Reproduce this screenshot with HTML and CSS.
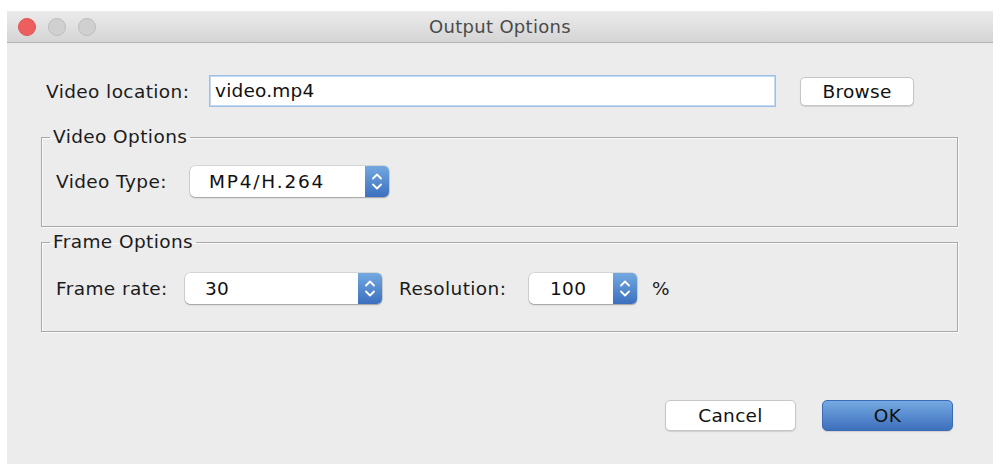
FILE: index.html
```html
<!DOCTYPE html>
<html>
<head>
<meta charset="utf-8">
<title>Output Options</title>
<link rel="stylesheet" href="styles.css">
</head>
<body>
<div class="window">
  <div class="titlebar">
    <div class="lights">
      <span class="light close"></span>
      <span class="light"></span>
      <span class="light"></span>
    </div>
    <div class="title">Output Options</div>
  </div>
  <div class="content">
    <div class="row loc-row">
      <span class="label loc-label">Video location:</span>
      <div class="textfield">video.mp4</div>
      <button class="btn browse">Browse</button>
    </div>
    <fieldset class="group group-video">
      <legend>Video Options</legend>
      <div class="row">
        <span class="label type-label">Video Type:</span>
        <div class="select sel-type">
          <span class="sel-value">MP4/H.264</span>
          <span class="stepper"><svg viewBox="0 0 24 31" width="24" height="31"><path d="M8 12.5 L12 8.5 L16 12.5 M8 18.5 L12 22.5 L16 18.5" fill="none" stroke="#fff" stroke-width="1.8" stroke-linecap="round" stroke-linejoin="round"/></svg></span>
        </div>
      </div>
    </fieldset>
    <fieldset class="group group-frame">
      <legend>Frame Options</legend>
      <div class="row">
        <span class="label rate-label">Frame rate:</span>
        <div class="select sel-rate">
          <span class="sel-value">30</span>
          <span class="stepper"><svg viewBox="0 0 24 31" width="24" height="31"><path d="M8 12.5 L12 8.5 L16 12.5 M8 18.5 L12 22.5 L16 18.5" fill="none" stroke="#fff" stroke-width="1.8" stroke-linecap="round" stroke-linejoin="round"/></svg></span>
        </div>
        <span class="label res-label">Resolution:</span>
        <div class="select sel-res">
          <span class="sel-value">100</span>
          <span class="stepper"><svg viewBox="0 0 24 31" width="24" height="31"><path d="M8 12.5 L12 8.5 L16 12.5 M8 18.5 L12 22.5 L16 18.5" fill="none" stroke="#fff" stroke-width="1.8" stroke-linecap="round" stroke-linejoin="round"/></svg></span>
        </div>
        <span class="label pct">%</span>
      </div>
    </fieldset>
    <div class="actions">
      <button class="btn cancel">Cancel</button>
      <button class="btn ok">OK</button>
    </div>
  </div>
</div>
</body>
</html>
```

FILE: styles.css
```css
html, body {
  margin: 0;
  padding: 0;
  background: #ffffff;
}
body {
  font-family: "DejaVu Sans", "Liberation Sans", sans-serif;
  color: #1b1b1b;
  padding: 11px 7px 0 7px;
}
.window {
  width: 986px;
  height: 453px;
  background: #ececec;
  display: flex;
  flex-direction: column;
}
.titlebar {
  height: 31px;
  flex: none;
  background: linear-gradient(#ebebeb, #d5d5d5);
  border-bottom: 1px solid #b4b4b4;
  display: flex;
  align-items: center;
  position: relative;
}
.lights {
  display: flex;
  gap: 12px;
  padding-left: 11px;
}
.light {
  width: 18px;
  height: 18px;
  border-radius: 50%;
  background: #d0d0d0;
  border: 1px solid #bdbdbd;
  box-sizing: border-box;
}
.light.close {
  background: #ec5f5e;
  border-color: #e05352;
}
.title {
  position: absolute;
  left: 0;
  right: 0;
  text-align: center;
  font-size: 18px;
  letter-spacing: 0.3px;
  color: #4b4b4b;
}
.content {
  padding: 32px 35px 0 34px;
  display: flex;
  flex-direction: column;
}
.row {
  display: flex;
  align-items: center;
}
.label {
  font-size: 18.5px;
  letter-spacing: 0.4px;
  white-space: nowrap;
}
.loc-row {
  height: 32px;
}
.loc-label {
  margin-left: 5px;
  width: 163px;
}
.textfield {
  width: 567px;
  height: 32px;
  box-sizing: border-box;
  background: #fff;
  border: 1px solid #9cc1e8;
  box-shadow: inset 0 0 0 1px #c3d9f1;
  font-size: 18.5px;
  letter-spacing: 0.2px;
  line-height: 30px;
  padding-left: 5px;
  color: #111;
}
.btn {
  font-family: inherit;
  font-size: 18.5px;
  letter-spacing: 0.3px;
  color: #111;
  background: #fff;
  border: 1px solid #c6c6c6;
  border-radius: 5px;
  box-shadow: 0 1px 1px rgba(0,0,0,0.12);
  box-sizing: border-box;
  padding: 0;
  cursor: default;
}
.browse {
  width: 114px;
  height: 29px;
  margin-left: 24px;
}
.group {
  margin: 0;
  padding: 0;
  border: 1px solid #a9a9a9;
  box-shadow: inset 1px 1px 0 #fafafa, 1px 1px 0 #fafafa;
  min-width: 0;
}
.group legend {
  font-size: 18.5px;
  letter-spacing: 0.4px;
  padding: 0 3px;
  margin-left: 8px;
  color: #1b1b1b;
  line-height: 20px;
}
.group-video {
  margin-top: 20px;
  height: 100px;
  box-sizing: border-box;
}
.group-video .row {
  padding: 19px 0 0 14px;
}
.group-frame {
  margin-top: 5px;
  height: 100px;
  box-sizing: border-box;
}
.group-frame .row {
  padding: 21px 0 0 14px;
}
.type-label {
  width: 134px;
}
.rate-label {
  width: 129px;
}
.res-label {
  margin-left: 17px;
  width: 130px;
}
.pct {
  margin-left: 15px;
}
.select {
  height: 31px;
  box-sizing: border-box;
  background: #fff;
  border-radius: 5px;
  box-shadow: 0 0 0 0.5px rgba(0,0,0,0.18), 0 1px 1.5px rgba(0,0,0,0.25);
  display: flex;
  align-items: center;
  overflow: hidden;
}
.sel-value {
  flex: 1;
  font-size: 18.5px;
  letter-spacing: 0.3px;
  color: #111;
}
.stepper {
  width: 24px;
  height: 31px;
  flex: none;
  background: linear-gradient(#73a9e0, #3c6fbe);
  display: flex;
}
.sel-type {
  width: 199px;
}
.sel-type .sel-value {
  padding-left: 19px;
  letter-spacing: 1.8px;
}
.sel-rate {
  width: 197px;
}
.sel-rate .sel-value {
  padding-left: 20px;
}
.sel-res {
  width: 108px;
}
.sel-res .sel-value {
  padding-left: 21px;
}
.actions {
  display: flex;
  justify-content: flex-end;
  gap: 26px;
  margin-top: 68px;
  padding-right: 5px;
}
.cancel, .ok {
  width: 131px;
  height: 31px;
}
.ok {
  background: linear-gradient(#74aae2, #3d6fbd);
  border-color: #3b6bb5;
}
```
